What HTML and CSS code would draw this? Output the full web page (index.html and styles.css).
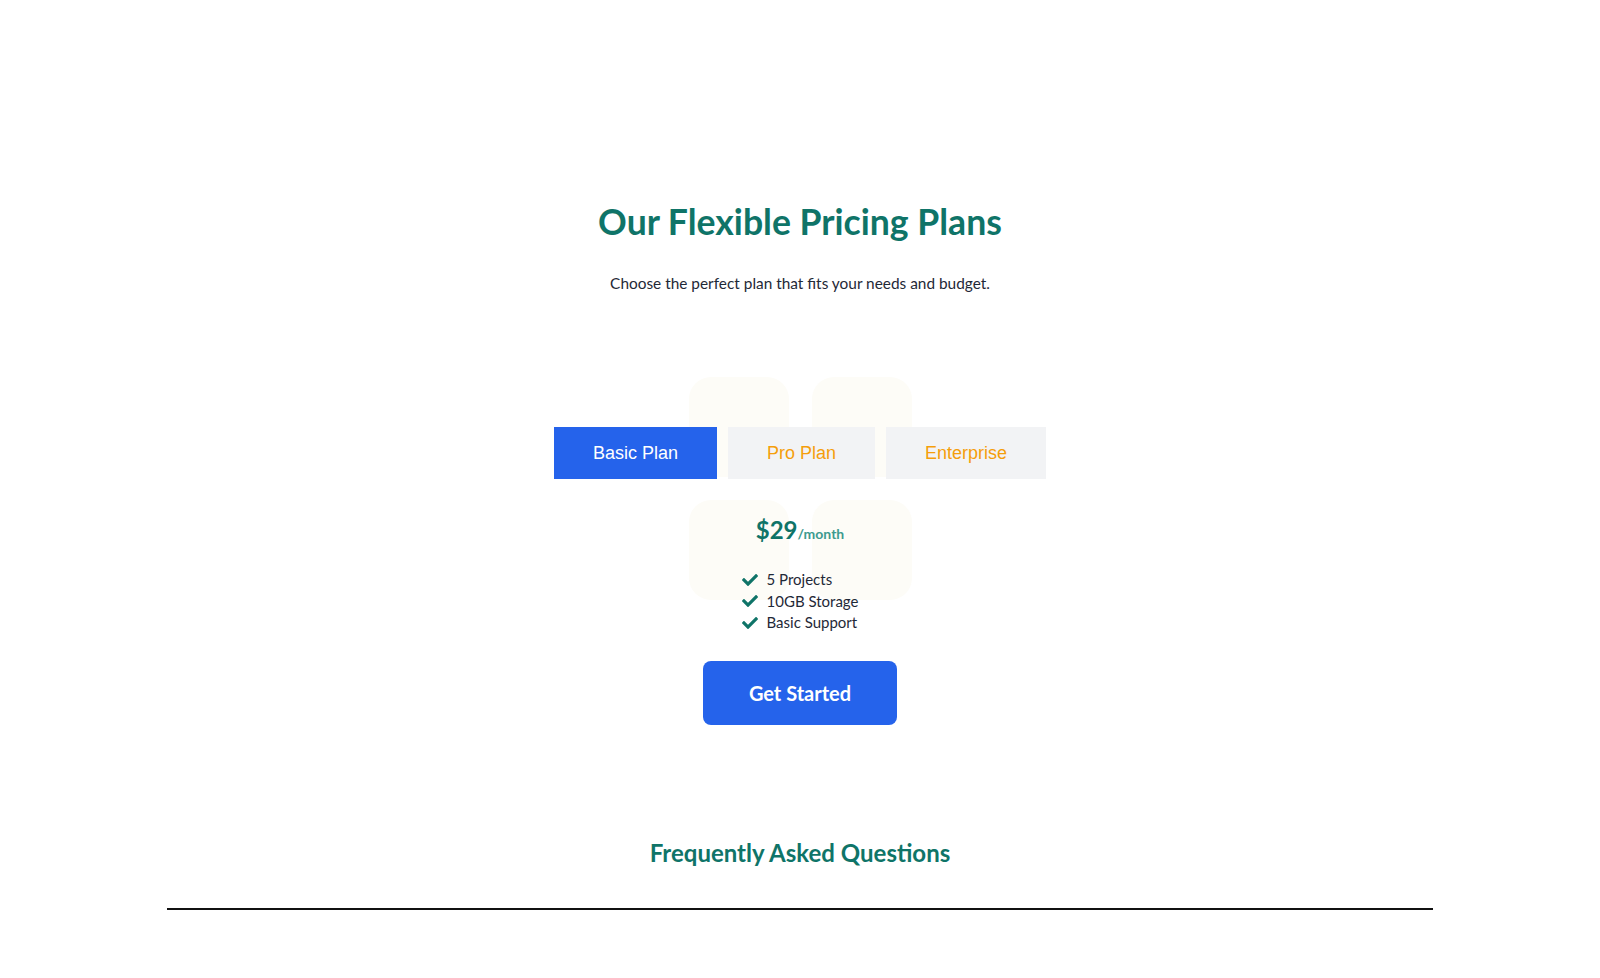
FILE: index.html
```html
<!DOCTYPE html>
<html lang="en">
<head>
<meta charset="utf-8">
<title>Pricing Plans</title>
<link rel="stylesheet" href="styles.css">
</head>
<body>
<section class="pricing">
  <h1 class="pricing-title">Our Flexible Pricing Plans</h1>
  <p class="pricing-subtitle">Choose the perfect plan that fits your needs and budget.</p>

  <div class="plan-area">
    <div class="deco" aria-hidden="true">
      <span></span><span></span><span></span><span></span>
    </div>
    <div class="tabs">
      <button class="tab tab-active">Basic Plan</button>
      <button class="tab">Pro Plan</button>
      <button class="tab">Enterprise</button>
    </div>
    <div class="plan">
      <div class="price"><span class="amount">$29</span><span class="period">/month</span></div>
      <ul class="features">
        <li><svg class="check" viewBox="0 0 512 512"><path d="M173.9 439.4l-166.4-166.4c-10-10-10-26.2 0-36.2l36.2-36.2c10-10 26.2-10 36.2 0L192 312.7 432.1 72.6c10-10 26.2-10 36.2 0l36.2 36.2c10 10 10 26.2 0 36.2L210.1 439.4c-10 10-26.2 10-36.2 0z"/></svg>5 Projects</li>
        <li><svg class="check" viewBox="0 0 512 512"><path d="M173.9 439.4l-166.4-166.4c-10-10-10-26.2 0-36.2l36.2-36.2c10-10 26.2-10 36.2 0L192 312.7 432.1 72.6c10-10 26.2-10 36.2 0l36.2 36.2c10 10 10 26.2 0 36.2L210.1 439.4c-10 10-26.2 10-36.2 0z"/></svg>10GB Storage</li>
        <li><svg class="check" viewBox="0 0 512 512"><path d="M173.9 439.4l-166.4-166.4c-10-10-10-26.2 0-36.2l36.2-36.2c10-10 26.2-10 36.2 0L192 312.7 432.1 72.6c10-10 26.2-10 36.2 0l36.2 36.2c10 10 10 26.2 0 36.2L210.1 439.4c-10 10-26.2 10-36.2 0z"/></svg>Basic Support</li>
      </ul>
      <button class="cta">Get Started</button>
    </div>
  </div>
</section>

<section class="faq">
  <h2 class="faq-title">Frequently Asked Questions</h2>
  <hr class="faq-rule">
</section>
</body>
</html>
```

FILE: styles.css
```css
* { box-sizing: border-box; }

body {
  margin: 0;
  background: #ffffff;
  font-family: "Lato", "Noto Sans", sans-serif;
  color: #1f2937;
}

.pricing {
  padding-top: 200px;
  text-align: center;
}

.pricing-title {
  margin: 0;
  font-size: 35.6px;
  line-height: 43px;
  font-weight: 700;
  color: #0f7468;
}

.pricing-subtitle {
  margin: 28px 0 0;
  font-size: 15.4px;
  line-height: 24px;
  color: #1f2937;
}

.plan-area {
  position: relative;
  margin-top: 132px;
  display: flex;
  flex-direction: column;
  align-items: center;
}

.deco {
  position: absolute;
  top: -50px;
  left: 50%;
  margin-left: -111px;
  display: grid;
  grid-template-columns: 100px 100px;
  grid-auto-rows: 100px;
  gap: 23px;
  z-index: 0;
}

.deco span {
  background: #fdfcf7;
  border-radius: 22px;
}

.tabs {
  position: relative;
  z-index: 1;
  display: flex;
  gap: 11px;
}

.tab {
  height: 52px;
  padding: 0 39px;
  border: none;
  border-radius: 0;
  background: #f2f3f5;
  color: #f59e0b;
  font-family: "Liberation Sans", Arial, sans-serif;
  font-size: 18px;
  cursor: pointer;
}

.tab-active {
  background: #2563eb;
  color: #ffffff;
}

.plan {
  position: relative;
  z-index: 1;
  display: flex;
  flex-direction: column;
  align-items: center;
}

.price {
  margin-top: 35px;
  line-height: 32px;
  color: #0f7468;
}

.amount {
  font-size: 24px;
  font-weight: 700;
}

.period {
  font-size: 14px;
  font-weight: 700;
  color: #3d9a8f;
}

.features {
  list-style: none;
  margin: 19px 0 0;
  padding: 0;
  text-align: left;
  font-size: 15px;
  line-height: 21.5px;
  color: #1f2937;
}

.features li {
  display: flex;
  align-items: center;
  gap: 9px;
}

.check {
  width: 16px;
  height: 16px;
  fill: #0f7468;
}

.cta {
  margin-top: 27px;
  width: 194px;
  height: 64px;
  border: none;
  border-radius: 8px;
  background: #2563eb;
  color: #ffffff;
  font-family: "Lato", "Noto Sans", sans-serif;
  font-size: 20px;
  font-weight: 700;
  cursor: pointer;
}

.faq {
  padding: 112px 167px 0;
  text-align: center;
}

.faq-title {
  margin: 0;
  font-size: 24px;
  line-height: 32px;
  font-weight: 700;
  color: #0f7468;
}

.faq-rule {
  margin: 39px 0 0;
  border: none;
  border-top: 2px solid #111111;
}
```
